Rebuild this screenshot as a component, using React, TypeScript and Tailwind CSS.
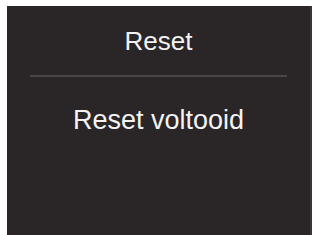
export default function App() {
  return (
    <div className="w-[312px] h-[235px] bg-white pt-[6px] pl-[7px] flex" style={{ fontFamily: '"Liberation Sans", Arial, sans-serif' }}>
      <div className="flex-1 bg-[#2a2627] flex flex-col items-center border-r-[2px] border-[#3b3738]">
        <div className="mt-[22px] text-[26px] leading-[26px] text-[#f3f3f3]">Reset</div>
        <div className="mt-[21px] h-[2px] w-[257px] bg-[#4a4647]" />
        <div className="mt-[30px] text-[27px] leading-[27px] text-[#f3f3f3]">Reset voltooid</div>
      </div>
    </div>
  );
}
